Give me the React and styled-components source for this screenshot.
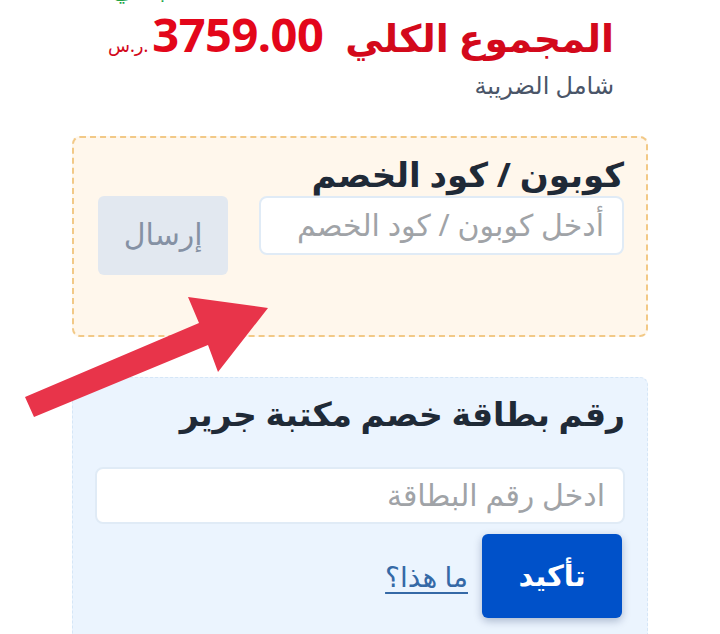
import React from "react";
import styled, { createGlobalStyle } from "styled-components";

const Global = createGlobalStyle`
  html, body { margin: 0; padding: 0; background: #ffffff; }
  body { font-family: "Noto Sans", "DejaVu Sans", sans-serif; direction: rtl; overflow: hidden; }
  * { box-sizing: border-box; }
`;

const Page = styled.div`
  position: relative;
  width: 720px;
  height: 634px;
  padding: 0 72px;
  overflow: hidden;
`;

const Promo = styled.div`
  height: 6px;
  margin-top: -23px;
  margin-bottom: 29px;
  padding-left: 40px;
  color: #21a447;
  font-size: 24px;
  font-weight: 700;
  line-height: 24px;
  text-align: left;
  white-space: nowrap;
`;

const TotalBlock = styled.div`
  padding: 0 34px 0 30px;
  margin-bottom: 36px;
`;

const TotalRow = styled.div`
  display: flex;
  align-items: baseline;
  gap: 22px;
  color: #d3091b;
  line-height: 44px;
  height: 44px;
`;

const TotalLabel = styled.div`
  font-size: 38px;
  font-weight: 700;
`;

const Amount = styled.div`
  display: flex;
  align-items: baseline;
  gap: 4px;
  direction: ltr;
`;

const Currency = styled.span`
  font-size: 18px;
  font-weight: 400;
  color: #d3091b;
`;

const Number = styled.span`
  font-size: 47px;
  font-weight: 700;
  color: #e3061a;
  letter-spacing: -0.5px;
`;

const TaxNote = styled.div`
  margin-top: 14px;
  font-size: 24px;
  color: #4a5568;
  line-height: 30px;
`;

const Box = styled.section`
  border: ${(p) => p.$bw} dashed ${(p) => p.$border};
  background: ${(p) => p.$bg};
  border-radius: 8px;
  padding: ${(p) => p.$pad};
  margin-bottom: ${(p) => p.$mb || "0"};
`;

const BoxTitle = styled.h3`
  margin: 0;
  font-size: ${(p) => p.$size};
  font-weight: 700;
  color: #1f2a37;
  line-height: 44px;
  white-space: nowrap;
`;

const FormRow = styled.div`
  display: flex;
  align-items: flex-start;
  gap: 31px;
`;

const Field = styled.div`
  width: ${(p) => p.$w};
  height: ${(p) => p.$h};
  margin-top: ${(p) => p.$mt || "0"};
  background: #ffffff;
  border: 2px solid #e0ebf6;
  border-radius: 8px;
  display: flex;
  align-items: center;
  padding: 0 18px 2px;
  font-size: 30px;
  color: #a0a3a7;
  white-space: nowrap;
`;

const GreyButton = styled.button`
  width: 131px;
  height: 79px;
  border: none;
  border-radius: 6px;
  background: #e2e8f0;
  color: #8591a4;
  font-family: inherit;
  font-size: 30px;
  padding: 0 0 4px;
`;

const ActionRow = styled.div`
  display: flex;
  align-items: center;
  gap: 14px;
  margin-top: 10px;
`;

const BlueButton = styled.button`
  width: 140px;
  height: 84px;
  border: none;
  border-radius: 6px;
  background: #0051c9;
  color: #ffffff;
  font-family: inherit;
  font-size: 29px;
  font-weight: 700;
  box-shadow: 0 3px 8px rgba(0, 30, 80, 0.28);
  margin-right: 3px;
  padding: 0 0 4px;
`;

const HelpLink = styled.a`
  font-size: 28px;
  color: #3569a6;
  text-decoration: underline;
  text-decoration-thickness: 2px;
  text-underline-offset: 5px;
`;

const Arrow = styled.svg`
  position: absolute;
  left: 0;
  top: 0;
  pointer-events: none;
`;

export default function App() {
  return (
    <Page>
      <Global />
      <Promo>مجاني</Promo>
      <TotalBlock>
        <TotalRow>
          <TotalLabel>المجموع الكلي</TotalLabel>
          <Amount>
            <Currency>ر.س.</Currency>
            <Number>3759.00</Number>
          </Amount>
        </TotalRow>
        <TaxNote>شامل الضريبة</TaxNote>
      </TotalBlock>

      <Box $bw="2px" $border="#f2c987" $bg="#fff7ec" $pad="14px 22px 60px 24px" $mb="40px">
        <BoxTitle $size="34px">كوبون / كود الخصم</BoxTitle>
        <FormRow>
          <Field $w="366px" $h="59px">أدخل كوبون / كود الخصم</Field>
          <GreyButton>إرسال</GreyButton>
        </FormRow>
      </Box>

      <Box $bw="1.5px" $border="#d5e6f7" $bg="#ebf4fe" $pad="14px 22px 40px 22px">
        <BoxTitle $size="33px">رقم بطاقة خصم مكتبة جرير</BoxTitle>
        <Field $w="530px" $h="57px" $mt="31px">ادخل رقم البطاقة</Field>
        <ActionRow>
          <BlueButton>تأكيد</BlueButton>
          <HelpLink href="#">ما هذا؟</HelpLink>
        </ActionRow>
      </Box>

      <Arrow width="720" height="634" viewBox="0 0 720 634">
        <polygon
          fill="#e8344a"
          points="25,397 199,323 188,297 268,308 218,372 208,345 34,417"
        />
      </Arrow>
    </Page>
  );
}
